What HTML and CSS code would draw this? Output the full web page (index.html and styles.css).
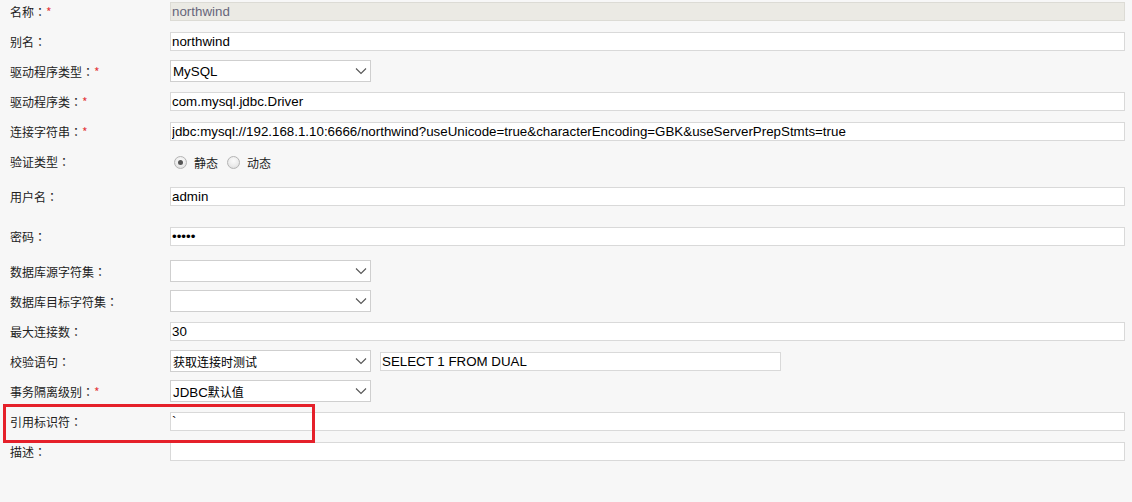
FILE: index.html
```html
<!DOCTYPE html>
<html lang="zh-CN">
<head>
    <meta charset="UTF-8">
    <title>数据连接</title>
    <link rel="stylesheet" href="styles.css">
</head>
<body>
    <div class="form">
        <div class="row">
            <label class="lbl">名称<i lang="ja">：</i><em>*</em></label>
            <input class="txt disabled" type="text" value="northwind" disabled>
        </div>
        <div class="row">
            <label class="lbl">别名<i lang="ja">：</i></label>
            <input class="txt" type="text" value="northwind">
        </div>
        <div class="row">
            <label class="lbl">驱动程序类型<i lang="ja">：</i><em>*</em></label>
            <div class="sel"><span class="sel-val">MySQL</span><svg class="chev" width="12" height="8" viewBox="0 0 12 8"><path d="M1 1.5 L6 6.5 L11 1.5" fill="none" stroke="#555" stroke-width="1.1"/></svg></div>
        </div>
        <div class="row">
            <label class="lbl">驱动程序类<i lang="ja">：</i><em>*</em></label>
            <input class="txt" type="text" value="com.mysql.jdbc.Driver">
        </div>
        <div class="row">
            <label class="lbl">连接字符串<i lang="ja">：</i><em>*</em></label>
            <input class="txt" type="text" value="jdbc:mysql://192.168.1.10:6666/northwind?useUnicode=true&amp;characterEncoding=GBK&amp;useServerPrepStmts=true">
        </div>
        <div class="row">
            <label class="lbl">验证类型<i lang="ja">：</i></label>
            <div class="radios">
                <span class="radio on"></span><span class="radio-txt">静态</span>
                <span class="radio"></span><span class="radio-txt">动态</span>
            </div>
        </div>
        <div class="row tall">
            <label class="lbl">用户名<i lang="ja">：</i></label>
            <input class="txt" type="text" value="admin">
        </div>
        <div class="row tall">
            <label class="lbl">密码<i lang="ja">：</i></label>
            <input class="txt" type="password" value="admin">
        </div>
        <div class="row">
            <label class="lbl">数据库源字符集<i lang="ja">：</i></label>
            <div class="sel"><span class="sel-val"></span><svg class="chev" width="12" height="8" viewBox="0 0 12 8"><path d="M1 1.5 L6 6.5 L11 1.5" fill="none" stroke="#555" stroke-width="1.1"/></svg></div>
        </div>
        <div class="row">
            <label class="lbl">数据库目标字符集<i lang="ja">：</i></label>
            <div class="sel"><span class="sel-val"></span><svg class="chev" width="12" height="8" viewBox="0 0 12 8"><path d="M1 1.5 L6 6.5 L11 1.5" fill="none" stroke="#555" stroke-width="1.1"/></svg></div>
        </div>
        <div class="row">
            <label class="lbl">最大连接数<i lang="ja">：</i></label>
            <input class="txt" type="text" value="30">
        </div>
        <div class="row">
            <label class="lbl">校验语句<i lang="ja">：</i></label>
            <div class="sel"><span class="sel-val cjk">获取连接时测试</span><svg class="chev" width="12" height="8" viewBox="0 0 12 8"><path d="M1 1.5 L6 6.5 L11 1.5" fill="none" stroke="#555" stroke-width="1.1"/></svg></div>
            <input class="txt sql" type="text" value="SELECT 1 FROM DUAL">
        </div>
        <div class="row">
            <label class="lbl">事务隔离级别<i lang="ja">：</i><em>*</em></label>
            <div class="sel"><span class="sel-val">JDBC<span class="cjk">默认值</span></span><svg class="chev" width="12" height="8" viewBox="0 0 12 8"><path d="M1 1.5 L6 6.5 L11 1.5" fill="none" stroke="#555" stroke-width="1.1"/></svg></div>
        </div>
        <div class="row marked">
            <label class="lbl">引用标识符<i lang="ja">：</i></label>
            <input class="txt" type="text" value="`">
            <div class="mark"></div>
        </div>
        <div class="row">
            <label class="lbl">描述<i lang="ja">：</i></label>
            <input class="txt" type="text" value="">
        </div>
    </div>
</body>
</html>
```

FILE: styles.css
```css
html, body {
    margin: 0;
    padding: 0;
    background: #f7f7f7;
    height: 100%;
    overflow: hidden;
}
body {
    font-family: "Liberation Sans", Arial, "Noto Sans CJK SC", sans-serif;
    font-size: 13.33px;
    color: #000;
}
.form {
    margin-top: -4px;
    padding-right: 7px;
}
.row {
    display: flex;
    align-items: center;
    height: 30px;
}
.row.tall { height: 40px; }
.row.marked { position: relative; }
.lbl {
    flex: 0 0 160px;
    padding-left: 10px;
    padding-top: 1px;
    font-family: "Noto Sans CJK SC", sans-serif;
    font-size: 12px;
    color: #222;
}
.lbl i {
    font-style: normal;
    font-family: "Noto Sans CJK JP", sans-serif;
}
.lbl em {
    font-style: normal;
    color: #e4393c;
}
.txt {
    flex: 1;
    box-sizing: border-box;
    height: 19px;
    margin: 0;
    padding: 0 1px;
    border: 1px solid #d9d9d9;
    background: #fff;
    font-family: "Liberation Sans", Arial, "Noto Sans CJK SC", sans-serif;
    font-size: 13.33px;
    color: #000;
    outline: none;
}
.txt.disabled {
    background: #ebeae4;
    color: #66667a;
    border-color: #dcdbd5;
}
.txt.sql {
    flex: 0 0 401px;
    margin-left: 9px;
}
.sel {
    position: relative;
    box-sizing: border-box;
    flex: 0 0 201px;
    height: 22px;
    border: 1px solid #cfcfcf;
    background: #fff;
    display: flex;
    align-items: center;
    padding-left: 2px;
}
.sel-val { font-size: 13.33px; }
.cjk {
    font-family: "Noto Sans CJK SC", sans-serif;
    font-size: 12px;
}
.chev {
    position: absolute;
    right: 3px;
    top: 6px;
}
.radios {
    display: flex;
    align-items: center;
    padding-left: 4px;
    padding-top: 2px;
    font-family: "Noto Sans CJK SC", sans-serif;
    font-size: 12px;
    color: #222;
}
.radio {
    box-sizing: border-box;
    width: 13px;
    height: 13px;
    border-radius: 50%;
    border: 1px solid #b4b4b4;
    background: radial-gradient(circle at 50% 35%, #fbfbfb 0%, #ececec 55%, #d6d6d6 100%);
    position: relative;
}
.radio.on::after {
    content: "";
    position: absolute;
    left: 3px;
    top: 3px;
    width: 5px;
    height: 5px;
    border-radius: 50%;
    background: #555;
}
.radio-txt {
    margin-left: 7px;
    margin-right: 9px;
}
.mark {
    position: absolute;
    left: 3px;
    top: -2px;
    width: 306px;
    height: 33px;
    border: 3px solid #e5202a;
    pointer-events: none;
}
```
